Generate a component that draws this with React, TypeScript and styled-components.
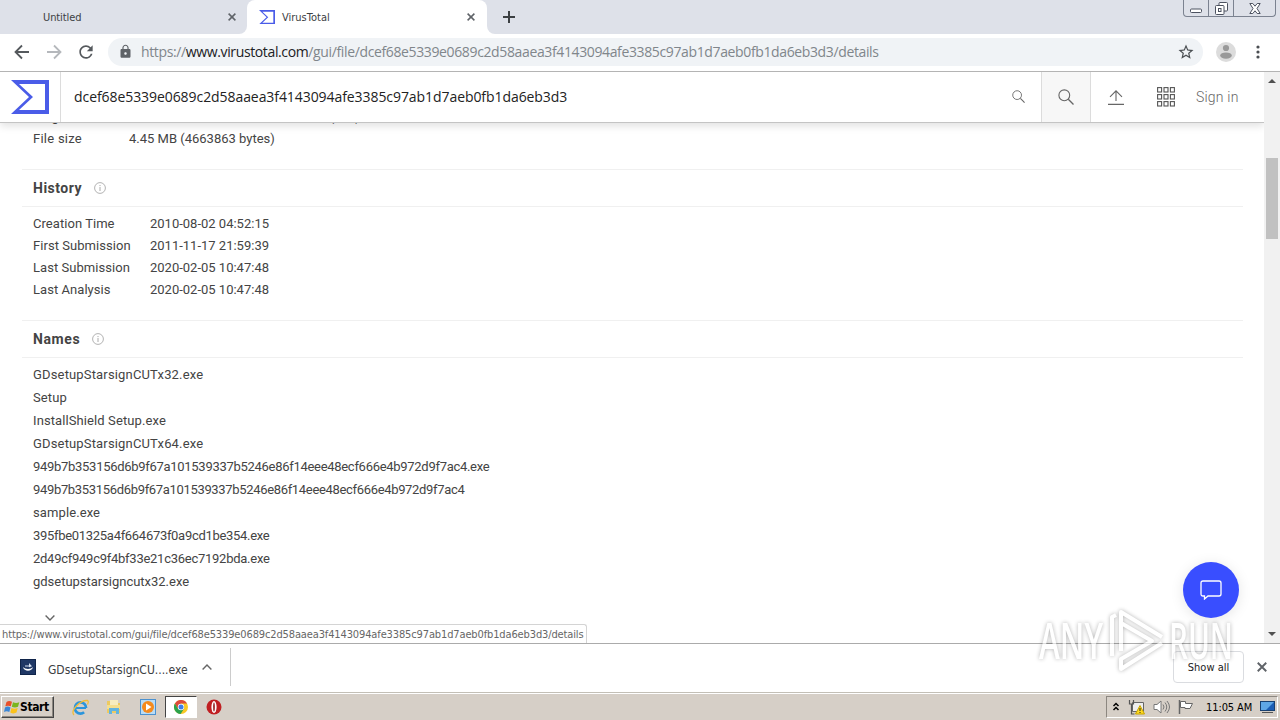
import styled, { createGlobalStyle } from "styled-components";
import { MdLock, MdStarBorder, MdRefresh } from "react-icons/md";

const HASH = "dcef68e5339e0689c2d58aaea3f4143094afe3385c97ab1d7aeb0fb1da6eb3d3";

const history = [
  ["Creation Time", "2010-08-02 04:52:15"],
  ["First Submission", "2011-11-17 21:59:39"],
  ["Last Submission", "2020-02-05 10:47:48"],
  ["Last Analysis", "2020-02-05 10:47:48"],
];

const names = [
  { text: "GDsetupStarsignCUTx32.exe", spacing: 0.16 },
  { text: "Setup", spacing: 0.1 },
  { text: "InstallShield Setup.exe", spacing: 0.1 },
  { text: "GDsetupStarsignCUTx64.exe", spacing: 0.16 },
  {
    text: "949b7b353156d6b9f67a101539337b5246e86f14eee48ecf666e4b972d9f7ac4.exe",
    spacing: -0.29,
  },
  {
    text: "949b7b353156d6b9f67a101539337b5246e86f14eee48ecf666e4b972d9f7ac4",
    spacing: -0.33,
  },
  { text: "sample.exe", spacing: 0.1 },
  { text: "395fbe01325a4f664673f0a9cd1be354.exe", spacing: -0.3 },
  { text: "2d49cf949c9f4bf33e21c36ec7192bda.exe", spacing: -0.26 },
  { text: "gdsetupstarsigncutx32.exe", spacing: -0.02 },
];

const GlobalStyle = createGlobalStyle`
  * {
    box-sizing: border-box;
  }

  body {
    margin: 0;
    overflow: hidden;
    font-family: Roboto, "Liberation Sans", sans-serif;
    font-size: 13px;
    color: #444;
  }

  svg {
    display: block;
    flex-shrink: 0;
  }
`;

const Screen = styled.div`
  position: relative;
  display: flex;
  flex-direction: column;
  width: 1280px;
  height: 720px;
  overflow: hidden;
  background: #fff;
`;

const Label = styled.span<{ $spacing?: number }>`
  white-space: nowrap;
  letter-spacing: ${(p) => p.$spacing ?? 0}px;
`;

const TabStrip = styled.div`
  display: flex;
  height: 34px;
  background: #dee1e9;
`;

const Tab = styled.div<{ $active?: boolean }>`
  display: flex;
  align-items: center;
  width: ${(p) => (p.$active ? 240 : 247)}px;
  height: 34px;
  padding: ${(p) => (p.$active ? "0 12px" : "0 11px 0 43px")};
  background: ${(p) => (p.$active ? "#fff" : "#dee1e9")};
  border-radius: ${(p) => (p.$active ? "8px 8px 0 0" : "0 0 8px 0")};
  font-family: "DejaVu Sans Condensed", "DejaVu Sans", sans-serif;
  font-size: 11px;
  color: #3c4043;

  & > :last-child {
    margin-left: auto;
  }
`;

const TabIcon = styled.div`
  margin-right: 7px;
`;

const TabTail = styled.div`
  background: #fff;
`;

const TabSpace = styled.div`
  display: flex;
  justify-content: space-between;
  width: 793px;
  height: 34px;
  padding: 11px 4px 0 16px;
  background: #dee1e9;
  border-radius: 0 0 0 8px;
`;

const WindowButtons = styled.div`
  display: flex;
  width: 93px;
  height: 17px;
  margin-top: -11px;
  border: 1px solid #7b8290;
  border-top: 0;
  border-radius: 0 0 4px 4px;
`;

const WindowButton = styled.div<{ $width: number }>`
  display: flex;
  align-items: center;
  justify-content: center;
  width: ${(p) => p.$width}px;
  height: 16px;
  border-right: 1px solid #7b8290;

  &:last-child {
    border-right: 0;
  }
`;

const Toolbar = styled.div`
  display: flex;
  align-items: center;
  height: 38px;
  padding: 0 0 2px 14px;
  border-bottom: 1px solid #b4b4b4;
`;

const NavButtons = styled.div`
  display: flex;
  align-items: center;
  gap: 16px;
  width: 94px;

  & > :last-child {
    margin-left: -2px;
  }
`;

const AddressBar = styled.div`
  display: flex;
  align-items: center;
  width: 1095px;
  height: 28px;
  padding: 0 8px 0 10px;
  border-radius: 14px;
  background: #f0f3f6;
  font-family: "Open Sans", "Noto Sans", sans-serif;
  font-size: 14px;
  color: #80868b;

  & > :last-child {
    margin-left: auto;
  }
`;

const Url = styled.span`
  margin-left: 8px;
  white-space: nowrap;
  letter-spacing: -0.37px;

  b {
    font-weight: 400;
    color: #202124;
  }
`;

const ToolbarEnd = styled.div`
  display: flex;
  align-items: center;
  gap: 20px;
  margin-left: 13px;
`;

const Viewport = styled.div`
  display: flex;
  height: 571px;
`;

const Page = styled.main`
  display: flex;
  flex-direction: column;
  width: 1264px;
  height: 571px;
  overflow: hidden;
`;

const Header = styled.header`
  position: relative;
  z-index: 1;
  display: flex;
  flex-shrink: 0;
  height: 51px;
  background: #fff;
  border-bottom: 1px solid #c4c4c4;
  box-shadow: 0 3px 8px rgba(0, 0, 0, 0.12);
`;

const Logo = styled.div`
  display: flex;
  align-items: center;
  width: 61px;
  padding-left: 11px;
  border-right: 1px solid #dcdcdc;
`;

const SearchField = styled.div`
  display: flex;
  align-items: center;
  justify-content: space-between;
  width: 980px;
  padding: 0 16px 1px 13px;
  font-family: "Open Sans", "Noto Sans", sans-serif;
  font-size: 14px;
  color: #222;
`;

const SearchButton = styled.div`
  display: flex;
  align-items: center;
  justify-content: center;
  width: 50px;
  background: #f7f7f7;
  border: solid #dcdcdc;
  border-width: 0 1px;
`;

const HeaderActions = styled.div`
  display: flex;
  align-items: center;
  padding-left: 17px;
  font-size: 14px;
  font-weight: 300;
  color: #666;

  & > :nth-child(2) {
    margin: 0 21px 0 33px;
  }
`;

const Content = styled.div`
  flex-shrink: 0;
  margin-top: -18px;
  padding: 0 21px 0 22px;
`;

const Row = styled.div<{ $labelWidth: number }>`
  display: grid;
  grid-template-columns: ${(p) => p.$labelWidth}px 1fr;
  align-items: center;
  height: 22px;
  padding-left: 11px;
`;

const Basics = styled.section`
  height: 64px;
`;

const SectionTitle = styled.h3`
  display: flex;
  align-items: center;
  gap: 12px;
  height: 38px;
  margin: 0;
  padding-left: 11px;
  border: solid #f0f0f0;
  border-width: 1px 0;
  font-size: 14px;
  font-weight: 700;
`;

const HistoryRows = styled.div`
  height: 113px;
  padding-top: 5px;
`;

const NameList = styled.ul`
  margin: 0;
  padding: 5px 0 0 11px;
  list-style: none;
`;

const NameItem = styled.li`
  display: flex;
  align-items: center;
  height: 23px;
`;

const More = styled.div`
  padding: 22px 0 0 23px;
`;

const Scrollbar = styled.div`
  display: flex;
  flex-direction: column;
  align-items: center;
  width: 16px;
  height: 571px;
  padding: 7px 0 7px;
  background: #f1f1f1;
`;

const Thumb = styled.div`
  width: 12px;
  height: 81px;
  margin: 75px 0 auto;
  background: #c1c1c1;
`;

const Status = styled.div`
  position: absolute;
  left: 0;
  top: 624px;
  display: flex;
  align-items: center;
  width: 587px;
  height: 19px;
  padding-left: 2px;
  background: #fff;
  border: solid #d4d4d4;
  border-width: 1px 1px 0 0;
  border-radius: 0 3px 0 0;
  font-family: "DejaVu Sans Condensed", "DejaVu Sans", sans-serif;
  font-size: 11px;
  color: #666;
`;

const Chat = styled.div`
  position: absolute;
  left: 1183px;
  top: 562px;
  display: flex;
  align-items: center;
  justify-content: center;
  width: 56px;
  height: 56px;
  border-radius: 50%;
  background: #394eff;
  box-shadow: 0 2px 14px rgba(0, 0, 0, 0.1);
`;

const DownloadBar = styled.div`
  display: flex;
  align-items: center;
  height: 49px;
  padding: 0 13px 2px 0;
  border-top: 1px solid #ababab;
  font-family: "DejaVu Sans Condensed", "DejaVu Sans", sans-serif;
  color: #3c4043;
`;

const Download = styled.div`
  display: flex;
  align-items: center;
  width: 231px;
  height: 38px;
  padding: 0 0 0 20px;
  border-right: 1px solid #ccc;
  font-size: 12px;
`;

const FileName = styled.div`
  width: 140px;
  margin: 6px 14px 0 12px;
`;

const ShowAll = styled.div`
  display: flex;
  align-items: center;
  justify-content: center;
  width: 71px;
  height: 32px;
  margin: 0 13px 0 auto;
  border: 1px solid #dadce0;
  border-radius: 4px;
  font-size: 11px;
  color: #222;
`;

const Taskbar = styled.div`
  display: flex;
  align-items: center;
  height: 28px;
  padding: 1px 2px 0 1px;
  background: #d6cfc7;
  border-top: 1px solid #c3bfb6;
  box-shadow: inset 0 1px #fff;
  font-family: "DejaVu Sans Condensed", "DejaVu Sans", sans-serif;
  font-size: 11px;
  color: #000;
`;

const StartButton = styled.div`
  display: flex;
  align-items: center;
  width: 53px;
  height: 22px;
  padding-left: 2px;
  border: 1px solid;
  border-color: #fff #444 #444 #fff;
  box-shadow: inset -1px -1px #8c8780;
  font-size: 12px;
  font-weight: 700;
`;

const Launcher = styled.div<{ $pressed?: boolean }>`
  display: flex;
  align-items: center;
  justify-content: center;
  width: ${(p) => (p.$pressed ? 32 : 34)}px;
  height: 22px;
  border: ${(p) => (p.$pressed ? "1px solid" : "0")};
  border-color: #444 #fff #fff #444;
  background: ${(p) => (p.$pressed ? "#fff" : "transparent")};
`;

const Launchers = styled.div`
  display: flex;
  margin-left: 9px;
`;

const Tray = styled.div`
  display: flex;
  align-items: center;
  width: 172px;
  height: 22px;
  margin-left: auto;
  padding-left: 5px;
  border: 1px solid;
  border-color: #8c8780 #fff #fff #8c8780;

  & > svg {
    margin-right: 8px;
  }

  & > span {
    margin-left: 4px;
  }

  & > svg:last-child {
    margin: 0 0 0 8px;
  }
`;

const Watermark = styled.svg`
  position: absolute;
  left: 1030px;
  top: 600px;
  filter: drop-shadow(0 0 2px rgba(0, 0, 0, 0.5));
  opacity: 0.6;
`;

const Sigma = ({ size }: { size: number }) => (
  <svg width={size} height={(size * 34) / 38} viewBox="0 0 38 34">
    <path
      fill="#4a5ce8"
      fillRule="evenodd"
      d="M0 0h38v34H0l18-17L0 0Zm8 4 14 13L8 30h26V4H8Z"
    />
  </svg>
);

const Cross = ({ size = 8 }: { size?: number }) => (
  <svg width={size} height={size} viewBox="0 0 8 8">
    <path d="m.6.6 6.8 6.8m0-6.8L.6 7.4" stroke="#5f6368" strokeWidth="1.5" />
  </svg>
);

const Arrow = ({ back }: { back?: boolean }) => (
  <svg width="16" height="16" viewBox="0 0 16 16">
    <path
      d={back ? "M15 8H2m6-6.5L1.5 8 8 14.5" : "M1 8h13M8 1.5 14.5 8 8 14.5"}
      fill="none"
      stroke={back ? "#55595d" : "#b5b8bc"}
      strokeWidth="1.8"
    />
  </svg>
);

const Magnifier = ({ size }: { size: number }) => (
  <svg width={size} height={size} viewBox="0 0 16 16" fill="none">
    <circle cx="6.3" cy="6.3" r="5.4" stroke="#666" strokeWidth="1.1" />
    <path d="m10.3 10.3 5.2 5.2" stroke="#666" strokeWidth="1.3" />
  </svg>
);

const Info = () => (
  <svg width="12" height="12" viewBox="0 0 12 12" fill="none" stroke="#aaa">
    <circle cx="6" cy="6" r="5.4" strokeWidth=".9" />
    <path d="M6 5v4M6 3v1.1" />
  </svg>
);

const Chevron = ({ up }: { up?: boolean }) => (
  <svg width="10" height="6" viewBox="0 0 10 6">
    <path
      d={up ? "m.6 5.4 4.4-4.4 4.4 4.4" : "M.6.6 5 5 9.4.6"}
      fill="none"
      stroke="#666"
      strokeWidth="1.4"
    />
  </svg>
);

const Triangle = ({ up }: { up?: boolean }) => (
  <svg width="8" height="4" viewBox="0 0 8 4">
    <path d={up ? "M0 4 4 0l4 4Z" : "M0 0h8L4 4Z"} fill="#505050" />
  </svg>
);

const BrowserTop = () => (
  <>
    <TabStrip>
      <TabTail>
        <Tab>
          <Label $spacing={-0.1}>Untitled</Label>
          <Cross />
        </Tab>
      </TabTail>
      <Tab $active>
        <TabIcon>
          <Sigma size={16} />
        </TabIcon>
        <Label>VirusTotal</Label>
        <Cross />
      </Tab>
      <TabTail>
        <TabSpace>
          <svg width="12" height="12" viewBox="0 0 12 12">
            <path d="M6 0v12M0 6h12" stroke="#3c4043" strokeWidth="2" />
          </svg>
          <WindowButtons>
            <WindowButton $width={25}>
              <svg width="12" height="12" viewBox="0 0 12 12">
                <rect x=".5" y="7" width="11" height="3.5" rx="1" fill="#fff" stroke="#4c5260" />
              </svg>
            </WindowButton>
            <WindowButton $width={25}>
              <svg width="13" height="13" viewBox="0 0 13 13" fill="#fff" stroke="#4c5260">
                <rect x="4" y=".5" width="8.5" height="8.5" rx="1" />
                <rect x=".5" y="3.5" width="8.5" height="9" rx="1" />
                <rect x="3.5" y="6.5" width="2.5" height="3" />
              </svg>
            </WindowButton>
            <WindowButton $width={41}>
              <svg width="12" height="11" viewBox="0 0 12 11">
                <path
                  d="M.8.5h3L6 3.2 8.2.5h3L8 5.5l3.2 5h-3L6 7.8l-2.2 2.7h-3L4 5.5Z"
                  fill="#fff"
                  stroke="#4c5260"
                />
              </svg>
            </WindowButton>
          </WindowButtons>
        </TabSpace>
      </TabTail>
    </TabStrip>
    <Toolbar>
      <NavButtons>
        <Arrow back />
        <Arrow />
        <MdRefresh size={20} color="#55595d" />
      </NavButtons>
      <AddressBar>
        <MdLock size={15} color="#5f6368" />
        <Url>
          https://<b>www.virustotal.com</b>/gui/file/{HASH}/details
        </Url>
        <MdStarBorder size={18} color="#4a4e52" />
      </AddressBar>
      <ToolbarEnd>
        <svg width="20" height="20" viewBox="0 0 20 20">
          <circle cx="10" cy="10" r="10" fill="#dcdcdc" />
          <circle cx="10" cy="6" r="3.1" fill="#999" />
          <ellipse cx="10" cy="13.6" rx="5.8" ry="3.2" fill="#999" />
        </svg>
        <svg width="4" height="14" viewBox="0 0 4 14" fill="#4a4e52">
          <circle cx="2" cy="2" r="1.6" />
          <circle cx="2" cy="7" r="1.6" />
          <circle cx="2" cy="12" r="1.6" />
        </svg>
      </ToolbarEnd>
    </Toolbar>
  </>
);

const PageHeader = () => (
  <Header>
    <Logo>
      <Sigma size={38} />
    </Logo>
    <SearchField>
      <Label $spacing={-0.07}>{HASH}</Label>
      <Magnifier size={13} />
    </SearchField>
    <SearchButton>
      <Magnifier size={16} />
    </SearchButton>
    <HeaderActions>
      <svg width="16" height="15" viewBox="0 0 16 15" fill="none" stroke="#666" strokeWidth="1.1">
        <path d="M8 11V.8M2 6.8l6-6 6 6M0 14.4h16" />
      </svg>
      <svg width="18" height="20" viewBox="0 0 18 20" fill="none" stroke="#555" strokeWidth="1.1">
        {[0.6, 7.6, 14.6].map((y) =>
          [0.6, 7, 13.4].map((x) => (
            <rect key={`${x}-${y}`} x={x} y={y} width="4" height="4.4" />
          ))
        )}
      </svg>
      <Label $spacing={0.2}>Sign in</Label>
    </HeaderActions>
  </Header>
);

const Details = () => (
  <Content>
    <Basics>
      <Row $labelWidth={96}>
        <Label>Magic</Label>
        <Label $spacing={0.1}>PE32 executable for MS Windows (GUI)</Label>
      </Row>
      <Row $labelWidth={96}>
        <Label $spacing={0.25}>File size</Label>
        <Label>4.45 MB (4663863 bytes)</Label>
      </Row>
    </Basics>
    <SectionTitle>
      <Label $spacing={0.5}>History</Label>
      <Info />
    </SectionTitle>
    <HistoryRows>
      {history.map(([label, value]) => (
        <Row key={label} $labelWidth={117}>
          <Label $spacing={0.05}>{label}</Label>
          <Label>{value}</Label>
        </Row>
      ))}
    </HistoryRows>
    <SectionTitle>
      <Label $spacing={0.6}>Names</Label>
      <Info />
    </SectionTitle>
    <NameList>
      {names.map((name) => (
        <NameItem key={name.text}>
          <Label $spacing={name.spacing}>{name.text}</Label>
        </NameItem>
      ))}
    </NameList>
    <More>
      <Chevron />
    </More>
  </Content>
);

const Downloads = () => (
  <DownloadBar>
    <Download>
      <svg width="16" height="16" viewBox="0 0 16 16">
        <rect x=".5" y=".5" width="15" height="15" fill="#1f3765" stroke="#10244a" />
        <path d="M3 8c1 5 9 5 10 0-2 2.5-8 2.5-10 0Z" fill="#fff" />
        <path d="M5 6.5h4V4l3 3.2-3 1V7.5H5Z" fill="#d9e4f4" />
      </svg>
      <FileName>
        <Label>GDsetupStarsignCU....exe</Label>
      </FileName>
      <Chevron up />
    </Download>
    <ShowAll>
      <Label>Show all</Label>
    </ShowAll>
    <Cross size={10} />
  </DownloadBar>
);

const WindowsTaskbar = () => (
  <Taskbar>
    <StartButton>
      <svg width="16" height="16" viewBox="0 0 16 16">
        <path d="M2.5 3Q5 1 8 2.8L6.8 7.3Q4 6 1.3 7.3Z" fill="#e8502a" />
        <path d="M9 3.2q3 1.6 6.3 0L14 7.8q-3 1.4-6.2 0Z" fill="#7ab51d" />
        <path d="M1 8.4q2.6-1.6 5.5 0L5.3 13Q2.6 11.6 0 13Z" fill="#3a86d6" />
        <path d="M7.5 8.9q3 1.5 6.2 0l-1.2 4.7q-3 1.6-6.2-.1Z" fill="#fbc21b" />
      </svg>
      <Label $spacing={-0.4}>Start</Label>
    </StartButton>
    <Launchers>
      <Launcher>
        <svg width="17" height="17" viewBox="0 0 17 17" fill="none">
          <circle cx="8.5" cy="9" r="5.6" stroke="#2b95dc" strokeWidth="2.6" strokeDasharray="30.5 4.7" strokeDashoffset="-4.7" />
          <path d="M4 9h10" stroke="#2b95dc" strokeWidth="2" />
          <path d="M2 16C-2 12 8 1 15.5 1.5q1.500.8 0 4" stroke="#f1bd38" strokeWidth="1.3" />
        </svg>
      </Launcher>
      <Launcher>
        <svg width="16" height="16" viewBox="0 0 16 16">
          <path d="M1 2h5l1 2h7v10H1Z" fill="#edca60" />
          <path d="M4 1h8v5H4Z" fill="#f8edbe" />
          <path d="M1 6h13v4H1Z" fill="#f5df8e" />
          <path d="M3 15V9h10v6h-3v-3H6v3Z" fill="#62b4df" />
        </svg>
      </Launcher>
      <Launcher>
        <svg width="16" height="16" viewBox="0 0 16 16">
          <rect x=".5" y=".5" width="15" height="15" fill="#b9dcf5" stroke="#4b91cf" />
          <circle cx="8" cy="8" r="6" fill="#f58a1c" />
          <path d="M6 4.5 11.5 8 6 11.5Z" fill="#fff" />
        </svg>
      </Launcher>
      <Launcher $pressed>
        <svg width="14" height="14" viewBox="0 0 14 14">
          <circle cx="7" cy="7" r="7" fill="#f9c825" />
          <path d="M.9 3.5A7 7 0 0 1 13.1 3.5H7L4 8.7Z" fill="#dd4a3b" />
          <path d="M.9 3.5A7 7 0 0 0 6.6 14L10 8.8H4Z" fill="#2ba24c" />
          <circle cx="7" cy="7" r="3.2" fill="#fff" />
          <circle cx="7" cy="7" r="2.5" fill="#3e7ee8" />
        </svg>
      </Launcher>
      <Launcher>
        <svg width="16" height="16" viewBox="0 0 16 16">
          <circle cx="8" cy="8" r="7.5" fill="#c01f22" />
          <ellipse cx="8" cy="8" rx="2.6" ry="6" fill="#fff" />
          <ellipse cx="8" cy="8" rx=".8" ry="4.6" fill="#8e1012" />
        </svg>
      </Launcher>
    </Launchers>
    <Tray>
      <svg width="8" height="10" viewBox="0 0 8 10" fill="none" stroke="#000" strokeWidth="1.5">
        <path d="m1.5 4 2.5-2.5L6.5 4m-5 4L4 5.5 6.5 8" />
      </svg>
      <svg width="17" height="16" viewBox="0 0 17 16">
        <path d="M4.5 3.5h11v9h-11z" fill="#eee" stroke="#666" />
        <path d="M1.5 1v4h4V1M3.5 5v10h3" fill="none" stroke="#555" strokeWidth="1.2" />
        <path d="M12 6.5 16.5 15h-9Z" fill="#ffd91f" stroke="#c7a200" />
        <path d="M12 9v3m0 1v1" stroke="#222" />
      </svg>
      <svg width="17" height="16" viewBox="0 0 17 16" fill="none" stroke="#777">
        <path d="M1 5.5h3L8 2v12l-4-3.5H1Z" fill="#fff" />
        <path d="M10 5.5q2 2.5 0 5M12 3.5q3.5 4.5 0 9M14 2q5 6 0 12" />
      </svg>
      <svg width="16" height="16" viewBox="0 0 16 16" stroke="#666">
        <path d="M1.5 1v14" fill="none" strokeWidth="1.5" />
        <path d="M2.5 2.5h5v2h7l-2.5 5H7v-1H2.5Z" fill="#fff" />
      </svg>
      <Label $spacing={-0.1}>11:05 AM</Label>
      <svg width="15" height="14" viewBox="0 0 15 14">
        <rect x=".5" y="1.5" width="14" height="9" fill="#1c5eb5" stroke="#184071" />
        <path d="M1 2h13L6 10H1Z" fill="#5fa7e6" />
        <path d="M2 12.5h11" stroke="#555" />
      </svg>
    </Tray>
  </Taskbar>
);

export default function App() {
  return (
    <Screen>
      <GlobalStyle />
      <BrowserTop />
      <Viewport>
        <Page>
          <PageHeader />
          <Details />
        </Page>
        <Scrollbar>
          <Triangle up />
          <Thumb />
          <Triangle />
        </Scrollbar>
      </Viewport>
      <Downloads />
      <WindowsTaskbar />
      <Status>
        <Label $spacing={-0.13}>
          https://www.virustotal.com/gui/file/{HASH}/details
        </Label>
      </Status>
      <Chat>
        <svg width="22" height="20" viewBox="0 0 22 20" fill="none" stroke="#fff" strokeWidth="1.3">
          <path d="M3 1h16q2 0 2 2v11q0 2-2 2H8l-3.5 3v-3H3q-2 0-2-2V3q0-2 2-2Z" />
        </svg>
      </Chat>
      <Watermark width="220" height="80" viewBox="0 0 220 80">
        <g
          fill="#fff"
          fontFamily="Open Sans, sans-serif"
          fontSize="50"
          fontWeight="600"
        >
          <text x="9" y="59" textLength="64" lengthAdjust="spacingAndGlyphs">
            ANY
          </text>
          <text x="139" y="59" textLength="64" lengthAdjust="spacingAndGlyphs">
            RUN
          </text>
        </g>
        <path
          d="M82 56V17l4-2M91 51V12l41 25M91 23l31 18-31 18v10l41-26"
          fill="none"
          stroke="#fff"
          strokeWidth="4"
          strokeLinejoin="round"
        />
      </Watermark>
    </Screen>
  );
}
